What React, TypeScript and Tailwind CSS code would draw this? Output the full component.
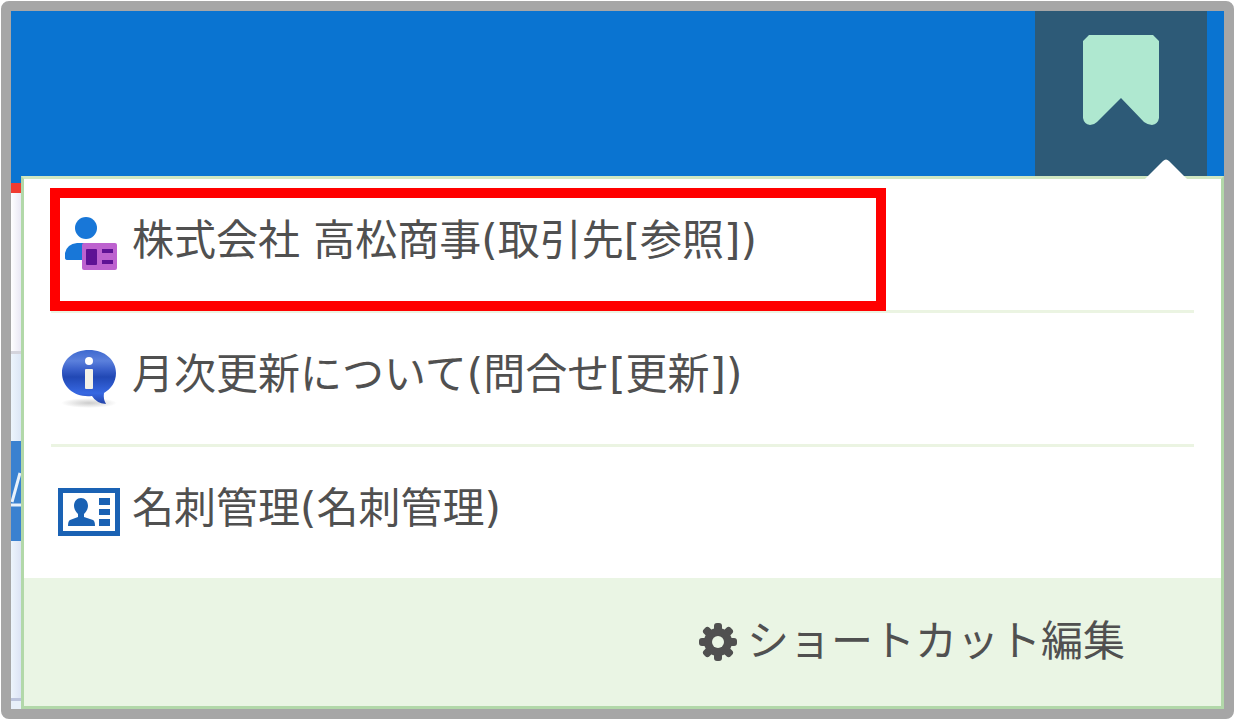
import type { ReactNode } from 'react';

type Shortcut = {
  label: string;
  href: string;
  icon: ReactNode;
  marked?: boolean; // outlined in red
};

function BookmarkIcon() {
  return (
    <svg viewBox="0 0 78 92" className="h-[92px] w-[78px]" aria-hidden="true">
      <path
        d="M7 0H71L77 6V83Q76 89 70 90Q66 90 62 87L39 63L15 87Q12 90 8 90Q2 89 1 83V6Z"
        fill="#afe8d0"
      />
    </svg>
  );
}

function CustomerIcon() {
  return (
    <svg viewBox="0 0 62 56" className="h-14 w-[62px]" aria-hidden="true">
      <circle cx="28" cy="12" r="11" fill="#1877d8" />
      <path d="M7 42V37Q9 28 19 27H26V44H10Q7 44 7 42Z" fill="#1877d8" />
      <rect x="24" y="27" width="35" height="27" rx="2" fill="#bd62cf" />
      <rect x="28" y="33" width="11" height="16" rx="1" fill="#5f1295" />
      <path d="M44 33H55V37H44ZM44 44H55V48H44Z" fill="#5f1295" />
    </svg>
  );
}

function InquiryIcon() {
  return (
    <svg viewBox="0 0 62 60" className="h-[60px] w-[62px]" aria-hidden="true">
      <defs>
        <linearGradient id="bubble" x1="0" y1="0" x2="0" y2="1">
          <stop offset="0" stopColor="#3e69cf" />
          <stop offset="0.2" stopColor="#5b80dc" />
          <stop offset="0.36" stopColor="#3a60ca" />
          <stop offset="0.5" stopColor="#2148b4" />
          <stop offset="0.8" stopColor="#3768e2" />
          <stop offset="1" stopColor="#2443a8" />
        </linearGradient>
        <radialGradient id="shade">
          <stop offset="0" stopColor="#999999" stopOpacity="0.5" />
          <stop offset="1" stopColor="#999999" stopOpacity="0" />
        </radialGradient>
      </defs>
      <ellipse cx="31" cy="55" rx="28" ry="5" fill="url(#shade)" />
      <path
        d="M31 2C47 2 58 12 58 25C58 34 53 41 46 45Q45 51 48 56Q38 55 34 48C17 50 4 39 4 25C4 12 15 2 31 2Z"
        fill="url(#bubble)"
      />
      <circle cx="31" cy="13" r="4" fill="#ffffff" />
      <rect x="27" y="21" width="8" height="20" rx="1" fill="#f3f1e8" />
    </svg>
  );
}

function CardIcon() {
  return (
    <svg viewBox="0 0 62 48" className="h-12 w-[62px]" aria-hidden="true">
      <rect x="2.5" y="2.5" width="57" height="43" fill="#ffffff" stroke="#1a62b4" strokeWidth="5" />
      <path
        d="M23 10C27 10 30 13 30 18C30 21 28 24 26 26V29L35 32Q37 33 37 38H10Q10 33 12 32L20 29V26C18 24 16 21 16 18C16 13 19 10 23 10Z"
        fill="#1a62b4"
      />
      <path d="M41 10H52V17H41ZM41 21H52V27H41ZM41 31H52V38H41Z" fill="#1a62b4" />
    </svg>
  );
}

function GearIcon() {
  return (
    <svg viewBox="0 0 38 38" className="h-[38px] w-[38px]" aria-hidden="true">
      <g fill="#505050">
        <rect x="15" y="0" width="8" height="38" rx="3" />
        <rect x="15" y="0" width="8" height="38" rx="3" transform="rotate(45 19 19)" />
        <rect x="15" y="0" width="8" height="38" rx="3" transform="rotate(90 19 19)" />
        <rect x="15" y="0" width="8" height="38" rx="3" transform="rotate(135 19 19)" />
        <circle cx="19" cy="19" r="14" />
      </g>
      <circle cx="19" cy="19" r="6" fill="#eaf5e4" />
    </svg>
  );
}

const shortcuts: Shortcut[] = [
  { label: '株式会社 高松商事(取引先[参照])', href: '#customer', icon: <CustomerIcon />, marked: true },
  { label: '月次更新について(問合せ[更新])', href: '#inquiry', icon: <InquiryIcon /> },
  { label: '名刺管理(名刺管理)', href: '#cards', icon: <CardIcon /> },
];

// Sliver of the page that shows beside the open menu
function PageEdge() {
  return (
    <div className="flex w-[10px] shrink-0 flex-col overflow-hidden">
      <div className="h-[7px] bg-[#0a74d1]" />
      <div className="h-[10px] bg-[#f03a30]" />
      <div className="h-[158px] bg-linear-to-r from-white to-[#e9e8f4]" />
      <div className="h-[3px] bg-[#d4d4dc]" />
      <div className="h-[87px] bg-linear-to-r from-[#edf5fc] to-[#dce6f5]" />
      <div className="h-[100px] bg-[#3a81d0]">
        <svg viewBox="0 0 10 100" className="h-[100px] w-[10px]" aria-hidden="true">
          <path d="M1 61L9 32M0 64H10" stroke="#e8f1fb" strokeWidth="3" fill="none" />
        </svg>
      </div>
      <div className="grow bg-linear-to-r from-[#edf5fc] to-[#dce3f4]" />
      <div className="h-[3px] bg-[#bcc4dc]" />
      <div className="h-2 bg-[#e8f0fa]" />
    </div>
  );
}

export default function App() {
  return (
    <div className="bg-white p-px font-['DejaVu_Sans','Noto_Sans_CJK_JP',sans-serif] text-[#505050]">
      <div className="rounded-lg border-[10px] border-[#a6a6a6]">
        <header className="flex h-[165px] justify-end bg-[#0a74d1] pr-[17px]">
          <button
            type="button"
            aria-label="ショートカット"
            className="relative flex w-[172px] justify-center bg-[#2d5a77] pt-6"
          >
            <BookmarkIcon />
            <svg viewBox="0 0 42 21" className="absolute right-5 -bottom-[3px] z-10 h-[21px] w-[42px]" aria-hidden="true">
              <path d="M0 21L18 3Q21 0 24 3L42 21Z" fill="#ffffff" />
            </svg>
          </button>
        </header>

        <div className="flex">
          <PageEdge />
          <nav className="grow border-3 border-t-[#d0e7c2] border-r-[#b2d8a9] border-b-[#b2d8a9] border-l-[#b2d8a9] bg-white">
            <ul className="px-[27px]">
              {shortcuts.map((item) => (
                <li key={item.href} className="relative h-[134px] border-b-3 border-[#ebf4e2] last:h-[131px] last:border-b-0">
                  <a href={item.href} className="flex h-[124px] items-center gap-3 pl-[7px]">
                    <span className="pt-1.5">{item.icon}</span>
                    <span className="text-[42px] leading-[60px] whitespace-nowrap">{item.label}</span>
                  </a>
                  {item.marked && (
                    <div className="pointer-events-none absolute top-[9px] -left-px h-[123px] w-[836px] border-10 border-[#ff0000]" />
                  )}
                </li>
              ))}
            </ul>
            <div className="flex h-32 items-center justify-end bg-[#eaf5e4] pr-24">
              <button type="button" className="flex items-center gap-2.5">
                <GearIcon />
                <span className="text-[42px] leading-[60px] whitespace-nowrap">ショートカット編集</span>
              </button>
            </div>
          </nav>
        </div>
      </div>
    </div>
  );
}
